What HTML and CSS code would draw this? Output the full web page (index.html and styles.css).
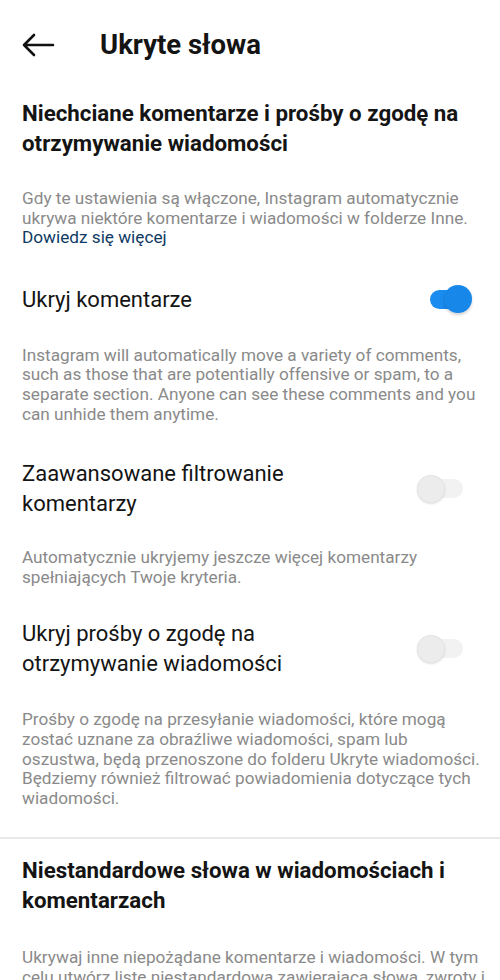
FILE: index.html
```html
<!DOCTYPE html>
<html lang="pl">
<head>
<meta charset="utf-8">
<link rel="stylesheet" href="styles.css">
</head>
<body>
<div class="screen">
  <header class="topbar">
    <svg class="back" width="34" height="24" viewBox="0 0 34 24"><path d="M32 12H3M13 2L3 12L13 22" fill="none" stroke="#111" stroke-width="2.6" stroke-linecap="round" stroke-linejoin="round"/></svg>
    <h1 class="title">Ukryte słowa</h1>
  </header>

  <section class="section">
    <h2 class="heading">Niechciane komentarze i prośby o zgodę na<br>otrzymywanie wiadomości</h2>
    <p class="desc d1">Gdy te ustawienia są włączone, Instagram automatycznie<br>ukrywa niektóre komentarze i wiadomości w folderze Inne.<br><span class="link">Dowiedz się więcej</span></p>

    <div class="row r1">
      <div class="row-title">Ukryj komentarze</div>
      <div class="switch on"><span class="track"></span><span class="knob"></span></div>
    </div>
    <p class="desc d2">Instagram will automatically move a variety of comments,<br>such as those that are potentially offensive or spam, to a<br>separate section. Anyone can see these comments and you<br>can unhide them anytime.</p>

    <div class="row r2">
      <div class="row-title">Zaawansowane filtrowanie<br>komentarzy</div>
      <div class="switch off"><span class="track"></span><span class="knob"></span></div>
    </div>
    <p class="desc d3">Automatycznie ukryjemy jeszcze więcej komentarzy<br>spełniających Twoje kryteria.</p>

    <div class="row r3">
      <div class="row-title">Ukryj prośby o zgodę na<br>otrzymywanie wiadomości</div>
      <div class="switch off"><span class="track"></span><span class="knob"></span></div>
    </div>
    <p class="desc d4">Prośby o zgodę na przesyłanie wiadomości, które mogą<br>zostać uznane za obraźliwe wiadomości, spam lub<br>oszustwa, będą przenoszone do folderu Ukryte wiadomości.<br>Będziemy również filtrować powiadomienia dotyczące tych<br>wiadomości.</p>
  </section>

  <div class="divider"></div>

  <section class="section second">
    <h2 class="heading">Niestandardowe słowa w wiadomościach i<br>komentarzach</h2>
    <p class="desc d5">Ukrywaj inne niepożądane komentarze i wiadomości. W tym<br>celu utwórz listę niestandardową zawierającą słowa, zwroty i<br>emotikony, których nie chcesz oglądać.</p>
  </section>
</div>
</body>
</html>
```
FILE: styles.css
```css
* { box-sizing: border-box; }
html, body {
  margin: 0;
  padding: 0;
  background: #fff;
}
body {
  font-family: Roboto, "Noto Sans", Arial, sans-serif;
  color: #141414;
  width: 500px;
  height: 980px;
  overflow: hidden;
}
.screen {
  width: 500px;
}
.topbar {
  display: flex;
  align-items: center;
  height: 88px;
  padding-left: 21px;
}
.back {
  display: block;
  margin-top: 2px;
}
.title {
  margin: 0 0 0 45px;
  font-size: 27.5px;
  font-weight: 700;
  letter-spacing: 0;
}
.section {
  padding: 10px 0 0 22px;
}
.section.second {
  padding-top: 16px;
}
.heading {
  margin: 0;
  font-size: 22.3px;
  line-height: 30px;
  font-weight: 700;
  white-space: nowrap;
}
.desc {
  margin: 0;
  font-size: 17.2px;
  line-height: 19.6px;
  color: #8a8a8a;
  white-space: nowrap;
}
.d1 { margin-top: 31px; }
.d2 { margin-top: 31px; }
.d3 { margin-top: 29px; }
.d4 { margin-top: 31px; }
.d5 { margin-top: 33px; }
.link {
  color: #0f3a63;
}
.row {
  display: flex;
  align-items: center;
  justify-content: space-between;
}
.r1 { margin-top: 37px; }
.r2 { margin-top: 35px; }
.r3 { margin-top: 32px; }
.row-title {
  font-size: 22px;
  line-height: 30px;
  color: #141414;
  white-space: nowrap;
}
.switch {
  position: relative;
  width: 46px;
  height: 30px;
  flex: none;
}
.switch .track {
  position: absolute;
  top: 5px;
  height: 19px;
  border-radius: 10px;
}
.switch .knob {
  position: absolute;
  top: 0;
  width: 28px;
  height: 28px;
  border-radius: 50%;
}
.switch.on {
  margin-right: 28px;
}
.switch.on .track {
  left: 4px;
  width: 36px;
  background: #1a8cef;
}
.switch.on .knob {
  right: 0;
  background: #1787ea;
  box-shadow: 0 2px 3px rgba(0,0,0,0.18);
}
.switch.off {
  margin-right: 37px;
}
.switch.off .track {
  left: 11px;
  width: 35px;
  background: #f2f2f2;
}
.switch.off .knob {
  left: 0;
  top: 1px;
  background: #ececec;
  box-shadow: 0 1px 2px rgba(0,0,0,0.12), inset 0 0 0 1px rgba(0,0,0,0.03);
}
.divider {
  margin-top: 29px;
  height: 2px;
  background: #e8e8e8;
}
```
